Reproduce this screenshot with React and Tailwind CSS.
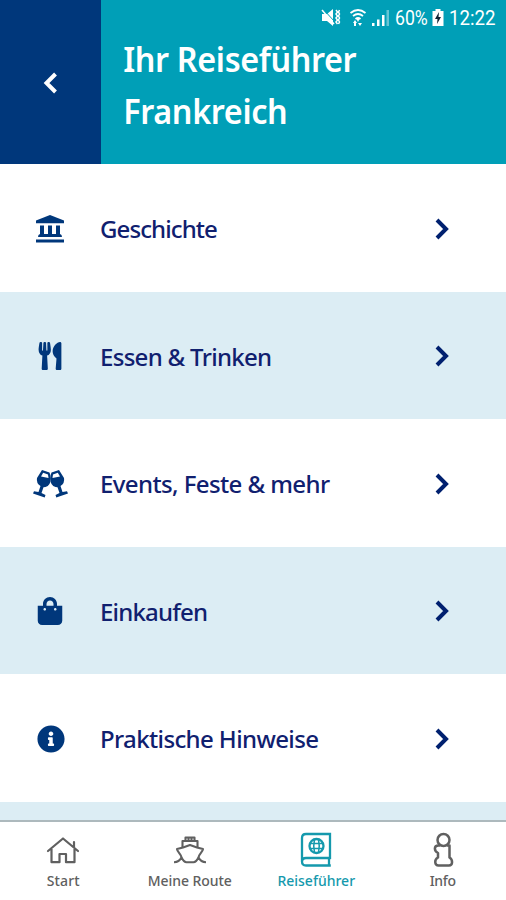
import React from "react";
import { FaUtensils, FaShoppingBag, FaInfoCircle } from "react-icons/fa";

function MuseumIcon({ className }) {
  return (
    <svg viewBox="0 0 28 28" className={className} fill="currentColor">
      <path d="M14 0L28 5.500v2.700H0V5.500z" />
      <path d="M4 10.500h4v8.500h4v-8.500h4v8.500h4v-8.500h4V19q2 .500 2 3H2q0-2.500 2-3z" />
      <path d="M0 24.500h28v3H0z" />
    </svg>
  );
}

function Glass() {
  return (
    <g>
      <path d="M9 0L16.500 2.500q1.200 2.500 1.200 6 0 7-5.200 8.500l-2 .200L8.500 23l4 2-.800 2.500L0 23.500l1-2.300 4.500.800L7.500 16Q3 13 4 8z" fill="currentColor" />
      <path d="M10.200 2.800l4.800 1.600.500 3.600L8 6.500z" fill="#fff" />
    </g>
  );
}

function CheersIcon({ className }) {
  return (
    <svg viewBox="0 0 35 28" className={className}>
      <Glass />
      <g transform="translate(35 0) scale(-1 1)"><Glass /></g>
    </svg>
  );
}

const rows = [
  { label: "Geschichte", Icon: MuseumIcon, size: "size-7", track: "tracking-[-0.9px]" },
  { label: "Essen & Trinken", Icon: FaUtensils, size: "size-7", track: "tracking-[-0.7px]" },
  { label: "Events, Feste & mehr", Icon: CheersIcon, size: "w-[35px] h-7", track: "tracking-[-0.6px]" },
  { label: "Einkaufen", Icon: FaShoppingBag, size: "size-7", track: "tracking-[-0.8px]" },
  { label: "Praktische Hinweise", Icon: FaInfoCircle, size: "size-7 ml-0.5", track: "tracking-[-0.62px]" },
];

function Chevron({ className }) {
  return (
    <svg viewBox="0 0 14 22" className={className} fill="none" stroke="currentColor" strokeWidth="4">
      <path d="M2 2 L11 11 L2 20" />
    </svg>
  );
}

function StatusBar() {
  return (
    <div className="absolute left-[320px] top-0 h-9 w-[186px] text-white font-['Roboto',sans-serif]">
      <svg className="absolute left-0 top-0 h-9 w-[72px]" viewBox="0 0 72 36" fill="currentColor">
        <path d="M2 14h5l6-5v17l-6-5H2z" />
        <path d="M3 9L15 22" stroke="#009fb7" strokeWidth="1" />
        <path d="M2 10L14 24" stroke="currentColor" strokeWidth="1.5" />
        <path d="M16 10l1.500 2-1.500 2 1.500 2-1.500 2 1.500 2-1.500 2 1.500 2M19.500 10l-1 2 1 2-1 2 1 2-1 2 1 2-1 2" fill="none" stroke="currentColor" strokeWidth="1.500" />
        <g fill="none" stroke="currentColor" strokeWidth="1.800">
          <path d="M30.500 13q7.500-6 15 0M33 16q5-4 10 0M35.500 19q2.500-2 5 0" />
        </g>
        <path d="M36 18h4l-2 4zM33 23l2-3 2 3h-1v3h-2v-3zM38 23h4l-2 3z" />
        <path d="M52 23h2.500v3H52zM57 19.500h2.500V26H57zM62 15h2.500v11H62z" />
        <path d="M66.500 10H69v16h-2.500z" opacity=".4" />
      </svg>
      <span className="absolute left-[75px] top-0 origin-left scale-x-[0.84] text-[21px] leading-9 whitespace-nowrap">60%</span>
      <svg className="absolute left-[112px] top-0 h-9 w-3" viewBox="0 0 12 36">
        <path d="M3.500 9h5v2h3v15H.5V11h3z" fill="#fff" />
        <path d="M7 12L3 19h2.500L5 24l4-7H6.500z" fill="#123" />
      </svg>
      <span className="absolute left-[129px] top-0 origin-left scale-x-[0.89] text-[21px] leading-9 whitespace-nowrap">12:22</span>
    </div>
  );
}

function HomeIcon() {
  return (
    <svg className="h-9 w-9" viewBox="0 0 36 36" fill="none" stroke="currentColor" strokeWidth="2.200">
      <path d="M3 19L18 6.500l15 12.500M6.500 17v13.200h8V22h6.500v8.200h8.500V17M29 15V10" strokeLinejoin="round" strokeLinecap="round" />
    </svg>
  );
}

function ShipIcon() {
  return (
    <svg className="h-9 w-9" viewBox="0 0 36 36" fill="none" stroke="currentColor" strokeWidth="2.100" strokeLinejoin="round">
      <path d="M10.500 15.500V9h15v6.500M13.500 9V5.500h9V9M16.500 5.500V9M19.500 5.500V9" />
      <path d="M9.500 25.500c0-3-4-5-4.500-8.500l6-1.500 7-2.500 7 2.500 6 1.500c-.500 3.500-4.500 5.500-4.500 8.500" />
      <path d="M2 30.200c4 0 6-1.700 7.500-4.700 1.500 3 2.500 4.700 5 4.700h7c2.500 0 3.500-1.700 5-4.700 1.500 3 3.500 4.700 7.500 4.700" />
    </svg>
  );
}

function GuideIcon() {
  return (
    <svg className="h-9 w-9" viewBox="0 0 36 36" fill="none" stroke="currentColor" strokeWidth="2.300">
      <path d="M32 27V2H8Q4 2 4 6v23.500q0 4 4 4h24.800M4 30q0-4 4-4h24.800M31 26v8" />
      <circle cx="18.500" cy="14" r="7" />
      <path d="M11.500 11.500h14M11.500 16.500h14M16.500 7.500q-1.500 6.500 0 13M20.500 7.500q1.500 6.500 0 13" strokeWidth="1.500" />
    </svg>
  );
}

function InfoIcon() {
  return (
    <svg className="h-9 w-9" viewBox="0 0 36 36" fill="none" stroke="currentColor" strokeWidth="2.500" strokeLinejoin="round">
      <circle cx="18.500" cy="8" r="6" />
      <path d="M15 13.500h-1.500c-5 0-4.500 5.500-.5 7.500v4.500c-4 2-3.500 8 .5 8h10.500c4 0 4-6 .5-8V13.500h-2.500" />
    </svg>
  );
}

const tabs = [
  { label: "Start", Icon: HomeIcon, color: "text-[#606060]", track: "tracking-[0.1px]" },
  { label: "Meine Route", Icon: ShipIcon, color: "text-[#606060]", track: "tracking-[-0.05px]" },
  { label: "Reiseführer", Icon: GuideIcon, color: "text-[#1599ad]", track: "tracking-normal" },
  { label: "Info", Icon: InfoIcon, color: "text-[#606060]", track: "tracking-[-0.3px]" },
];

export default function App() {
  return (
    <div className="relative flex h-[900px] w-[506px] flex-col overflow-hidden bg-white font-['Noto_Sans',sans-serif]">
      <header className="flex h-[164px] shrink-0 bg-[#009fb7]">
        <div className="flex w-[101px] items-center justify-center bg-[#00377b] pt-0.5 text-white">
          <Chevron className="h-[22px] w-[15px] rotate-180" />
        </div>
        <h1 className="origin-left scale-x-[0.925] pt-[33px] pl-[24px] text-[35px] leading-[52px] font-semibold tracking-[-0.4px] text-white">
          Ihr Reiseführer<br />Frankreich
        </h1>
      </header>
      <StatusBar />
      <main className="h-[656px] shrink-0 overflow-hidden">
        {rows.map(({ label, Icon, size, track }, i) => (
          <div key={label} className={`flex h-[127.500px] items-center pt-0.5 ${i % 2 ? "bg-[#dcedf4]" : "bg-white"}`}>
            <div className="flex w-[100px] justify-center text-[#00377b]"><Icon className={size} /></div>
            <span className={`flex-1 pt-px text-2xl font-medium whitespace-nowrap text-[#10206f] ${track}`}>{label}</span>
            <Chevron className="mr-[57px] h-[22px] w-[14px] text-[#00206f]" />
          </div>
        ))}
        <div className="h-5 bg-[#dcedf4]" />
      </main>
      <nav className="flex h-20 shrink-0 border-t-2 border-[#adb9bd] bg-white">
        {tabs.map(({ label, Icon, color, track }) => (
          <div key={label} className={`flex flex-1 flex-col items-center pt-2.5 ${color}`}>
            <Icon />
            <span className={`mt-[3px] text-sm leading-5 font-medium whitespace-nowrap ${track}`}>{label}</span>
          </div>
        ))}
      </nav>
    </div>
  );
}
